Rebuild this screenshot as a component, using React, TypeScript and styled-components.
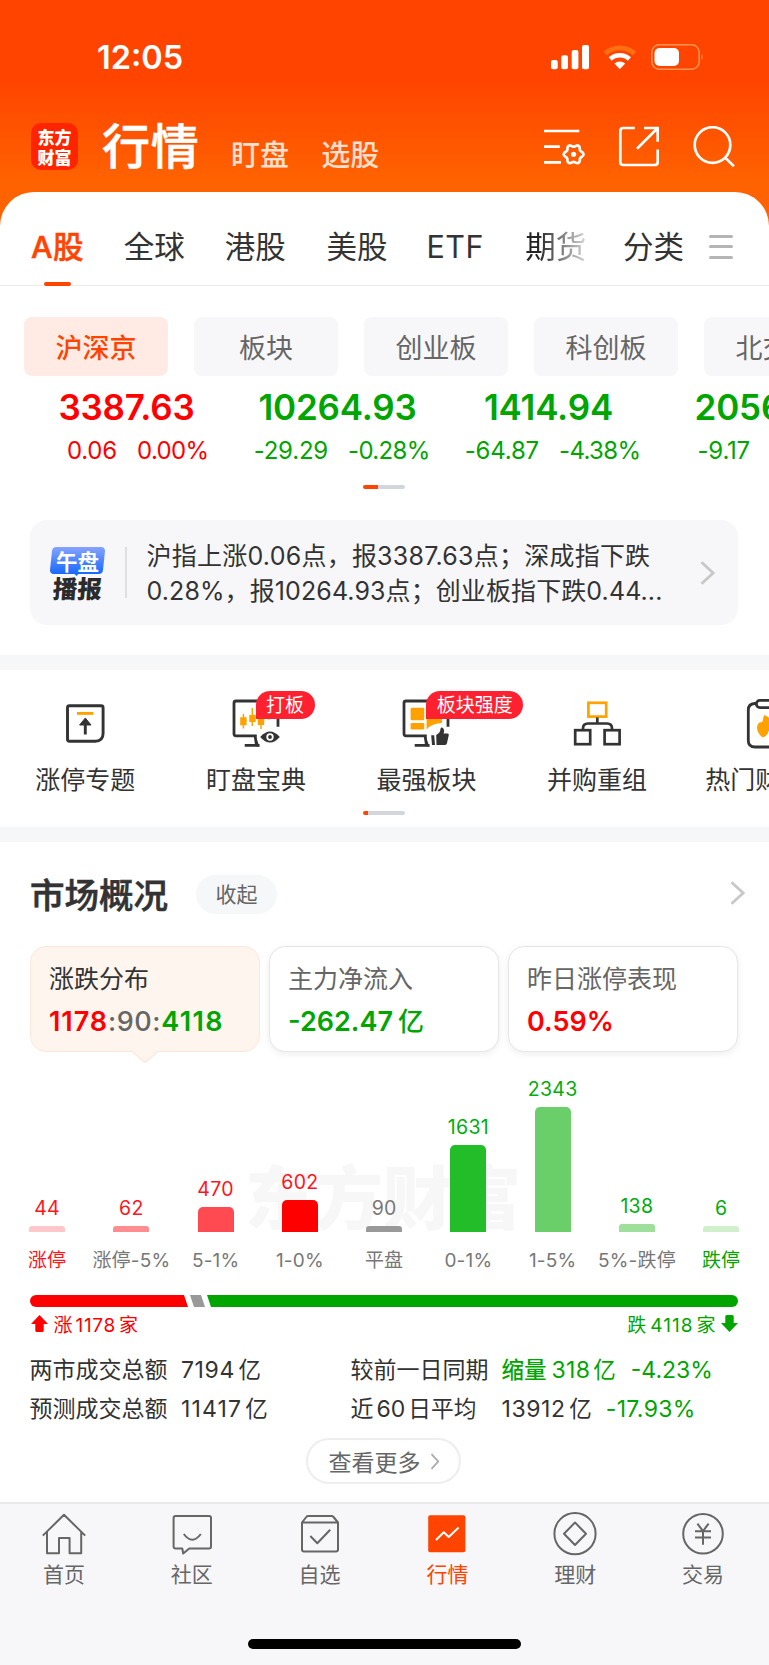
import React from 'react';
import styled, { createGlobalStyle } from 'styled-components';

const RED = '#ff0000';
const GREEN = '#00a500';
const ORANGE = '#ff4400';
const INK = '#333333';
const AMBER = '#ffa200';

const GlobalStyle = createGlobalStyle`
  * { box-sizing: border-box; }
  body {
    margin: 0;
    background: #fff;
    color: ${INK};
    font-family: Inter, "Noto Sans CJK SC", sans-serif;
    overflow: hidden;
  }
  svg { display: block; flex: none; }
`;

const Screen = styled.div`
  width: 769px;
  height: 1665px;
  display: flex;
  flex-direction: column;
  overflow: hidden;
  background: linear-gradient(#ff4400 0, #ff4400 80px, #ff6200 180px, #ff6200 240px, #fff 241px);
`;

const Txt = styled.span<{ $size: number; $color?: string; $weight?: number; $ls?: number; $ml?: number }>`
  font-size: ${(p) => p.$size}px;
  color: ${(p) => p.$color ?? 'inherit'};
  font-weight: ${(p) => p.$weight ?? 400};
  letter-spacing: ${(p) => p.$ls ?? 0}px;
  margin-left: ${(p) => p.$ml ?? 0}px;
  line-height: 1.2;
  white-space: nowrap;
`;

/* ---------- status bar and header ---------- */

const StatusBar = styled.div`
  height: 114px;
  padding: 0 65px 0 97px;
  display: flex;
  align-items: center;
  color: #fff;
`;

const StatusIcons = styled.div`
  margin-left: auto;
`;

const Header = styled.header`
  height: 78px;
  padding: 0 34px 13px 31px;
  display: flex;
  align-items: center;
  color: #fff;
`;

const Logo = styled.div`
  width: 47px;
  height: 47px;
  border-radius: 10px;
  background: #ff2400;
  display: flex;
  flex-direction: column;
  align-items: center;
  justify-content: center;
  font: 900 17px/19.5px "Noto Sans CJK SC", sans-serif;
  white-space: nowrap;
`;

const HeaderTitle = styled.h1`
  margin: 0 0 0 24px;
  font-size: 48px;
  line-height: 48px;
  font-weight: 500;
  letter-spacing: 0.8px;
  -webkit-text-stroke: 0.6px currentColor;
`;

const HeaderLink = styled.span<{ $gap: number }>`
  margin: 19px 0 0 ${(p) => p.$gap}px;
  font-size: 29px;
  line-height: 30px;
  font-weight: 500;
  color: #ffe0cf;
`;

const HeaderIcons = styled.div`
  margin-left: auto;
  display: flex;
  gap: 32.5px;

  > :nth-child(2) {
    margin: 0 1.5px 0 -1.5px;
  }
`;

/* ---------- white sheet ---------- */

const Sheet = styled.main`
  flex: 1;
  background: #fff;
  border-radius: 34px 34px 0 0;
  display: flex;
  flex-direction: column;
  overflow: hidden;
`;

const Tabs = styled.nav`
  height: 94px;
  padding: 1px 36px 0 31px;
  display: flex;
  align-items: stretch;
  border-bottom: 1px solid #ececec;
`;

const Tab = styled.div<{ $active?: boolean; $ml?: number; $fade?: boolean; $ls?: number }>`
  position: relative;
  display: flex;
  align-items: center;
  height: 92px;
  padding-top: 15px;
  margin-left: ${(p) => p.$ml ?? 0}px;
  font-size: 30.5px;
  line-height: 34px;
  letter-spacing: ${(p) => p.$ls ?? 0}px;
  white-space: nowrap;
  font-weight: ${(p) => (p.$active ? 500 : 400)};
  -webkit-text-stroke: ${(p) => (p.$active ? '0.5px currentColor' : '0')};
  color: ${(p) => (p.$active ? ORANGE : INK)};
  ${(p) =>
    p.$fade &&
    `background: linear-gradient(90deg, #222 20%, #ccc 95%); background-clip: text; -webkit-background-clip: text; color: transparent;`}
`;

const TabUnderline = styled.i`
  position: absolute;
  left: 13px;
  bottom: -1px;
  width: 27px;
  height: 4px;
  border-radius: 2px;
  background: ${ORANGE};
`;

const MenuIcon = styled.div`
  margin-left: auto;
  display: flex;
  flex-direction: column;
  justify-content: center;
  gap: 7.5px;
  padding-top: 15px;
`;

const MenuLine = styled.i`
  width: 24px;
  height: 3px;
  border-radius: 2px;
  background: #b5b5b5;
`;

const Chips = styled.div`
  display: flex;
  gap: 26px;
  padding: 31px 0 0 24px;
  height: 90px;
`;

const Chip = styled.div<{ $active?: boolean }>`
  flex: none;
  width: 144px;
  height: 59px;
  border-radius: 8px;
  display: flex;
  align-items: center;
  justify-content: center;
  padding-top: 4px;
  font-size: 27px;
  line-height: 32px;
  white-space: nowrap;
  background: ${(p) => (p.$active ? '#ffebe3' : '#f7f7fa')};
  color: ${(p) => (p.$active ? ORANGE : '#666')};
  font-weight: ${(p) => (p.$active ? 500 : 400)};
`;

const Quotes = styled.div`
  height: 109px;
  padding: 13px 0 0 21px;
  display: flex;
`;

const Quote = styled.div<{ $color: string }>`
  flex: none;
  width: 211px;
  color: ${(p) => p.$color};
`;

const QuotePrice = styled.div`
  text-align: center;
  font-size: 35px;
  line-height: 36px;
  font-weight: 600;
  letter-spacing: -0.2px;
`;

const QuoteMoves = styled.div`
  display: grid;
  grid-template-columns: 96px 1fr;
  column-gap: 20px;
  margin-top: 11px;
  font-size: 24px;
  line-height: 30px;
  white-space: nowrap;
`;

const MoveAmount = styled.span`
  text-align: right;
  letter-spacing: -0.2px;
`;

const MovePercent = styled.span`
  letter-spacing: -0.65px;
`;

const Pager = styled.div<{ $active: number }>`
  width: 42px;
  height: 4px;
  margin: 0 0 0 363px;
  border-radius: 2px;
  background: linear-gradient(90deg, ${ORANGE} ${(p) => p.$active}px, #d3d5dd ${(p) => p.$active}px);
`;

const News = styled.section`
  margin: 31px 31px 30px 30px;
  height: 105px;
  padding-left: 20px;
  border-radius: 17px;
  background: #f7f7fa;
  display: flex;
  align-items: center;
`;

const NewsBadge = styled.div`
  width: 55px;
  height: 51px;
  display: flex;
  flex-direction: column;
  align-items: center;
  font-family: "Noto Sans CJK SC", sans-serif;
`;

const NewsBadgeTop = styled.div`
  position: relative;
  width: 53px;
  height: 27px;
  border-radius: 4px;
  transform: skewX(-6deg);
  background: linear-gradient(#86a3ff, #1769ff);
  color: #fff;
  font-size: 21.5px;
  line-height: 27px;
  font-weight: 700;
  text-align: center;

  &::after {
    content: '';
    position: absolute;
    left: 24px;
    top: 26px;
    border: 3px solid transparent;
    border-top-color: #1769ff;
    border-bottom: 0;
  }
`;

const NewsBadgeText = styled.span`
  display: block;
  transform: skewX(6deg);
`;

const NewsBadgeBottom = styled.div`
  margin-top: 2px;
  transform: skewX(-4deg);
  color: #2b2b2b;
  font-size: 24.5px;
  line-height: 24px;
  font-weight: 900;
  white-space: nowrap;
`;

const NewsRule = styled.i`
  width: 1.5px;
  height: 51px;
  margin: 0 20px;
  background: #dfdfe3;
`;

const NewsText = styled.p`
  margin: 3px 0 0;
  width: 534px;
`;

const NewsLine = styled.span<{ $ls: number }>`
  display: block;
  font-size: 25px;
  line-height: 35.5px;
  letter-spacing: ${(p) => p.$ls}px;
  white-space: nowrap;
`;

const NewsArrow = styled.div`
  margin-left: 19.5px;
`;

const Band = styled.div`
  height: 15px;
  flex: none;
  background: #f6f7f9;
`;

/* ---------- shortcuts ---------- */

const Shortcuts = styled.section`
  height: 157px;
  flex: none;
`;

const ShortcutRow = styled.div`
  display: flex;
  height: 141px;
`;

const Shortcut = styled.div`
  position: relative;
  flex: none;
  width: 170.6px;
  padding-top: 23px;
  display: flex;
  flex-direction: column;
  align-items: center;
  gap: 11px;
  font-size: 25px;
  line-height: 36px;
  white-space: nowrap;
`;

const Badge = styled.span`
  position: absolute;
  left: 85px;
  top: 21px;
  height: 28px;
  padding: 1px 10.5px 0 10.5px;
  border-radius: 14px 14px 14px 0;
  background: #ff2030;
  color: #fff;
  font-size: 19px;
  line-height: 28px;
`;

/* ---------- market overview ---------- */

const Market = styled.section`
  flex: none;
  height: 660px;
  padding: 33px 31px 0 30px;
`;

const MarketHead = styled.div`
  display: flex;
  align-items: center;
  height: 39px;
  margin-right: -6.5px;
`;

const MarketTitle = styled.h2`
  margin: 3px 0 0;
  font-size: 34.5px;
  line-height: 36px;
  font-weight: 500;
  -webkit-text-stroke: 0.6px currentColor;
`;

const Collapse = styled.span`
  margin-left: 28px;
  width: 81px;
  height: 39px;
  border-radius: 20px;
  background: #f6f7f9;
  color: #666;
  font-size: 21px;
  line-height: 39px;
  text-align: center;
`;

const HeadChevron = styled.div`
  margin: -4px 0 0 auto;
`;

const Cards = styled.div`
  margin-top: 32px;
  display: grid;
  grid-template-columns: repeat(3, 1fr);
  gap: 9px;
`;

const Card = styled.div<{ $active?: boolean }>`
  position: relative;
  height: 106px;
  padding: 14px 0 0 18px;
  border-radius: 16px;
  border: 1.5px solid ${(p) => (p.$active ? '#ffe6db' : '#e6e6e6')};
  background: ${(p) => (p.$active ? '#fff5ef' : '#fff')};
  box-shadow: ${(p) => (p.$active ? 'none' : '0 2px 7px rgba(0, 0, 0, 0.07)')};
`;

const CardLabel = styled.div<{ $active?: boolean }>`
  font-size: 25px;
  line-height: 36px;
  color: ${(p) => (p.$active ? INK : '#666')};
`;

const CardValue = styled.div`
  margin-top: 7px;
  font-size: 27px;
  line-height: 36px;
  font-weight: 600;
  white-space: nowrap;
`;

const CardPointer = styled.svg`
  position: absolute;
  left: 100px;
  top: 103px;
`;

const Chart = styled.div`
  position: relative;
  height: 180px;
`;

const Watermark = styled.div`
  position: absolute;
  left: 215px;
  bottom: -2px;
  font: 900 69px/80px "Noto Sans CJK SC", sans-serif;
  color: #f7f7f7;
  white-space: nowrap;
`;

const Bars = styled.div`
  position: relative;
  display: grid;
  grid-template-columns: repeat(9, 84.25px);
  margin: 0 -26px 0 -25px;
  height: 180px;
  align-items: end;
`;

const BarColumn = styled.div`
  display: flex;
  flex-direction: column;
  align-items: center;
`;

const BarValue = styled.span<{ $color: string }>`
  font-size: 19.5px;
  line-height: 20px;
  letter-spacing: 0.3px;
  margin-bottom: 8px;
  color: ${(p) => p.$color};
`;

const Bar = styled.i<{ $h: number; $fill: string }>`
  width: 36px;
  height: ${(p) => p.$h}px;
  border-radius: ${(p) => (p.$h > 20 ? 5 : 3)}px ${(p) => (p.$h > 20 ? 5 : 3)}px 0 0;
  background: ${(p) => p.$fill};
`;

const Axis = styled.div`
  display: grid;
  grid-template-columns: repeat(9, 84.25px);
  margin: 17px -26px 0 -25px;
`;

const AxisLabel = styled.span<{ $color: string }>`
  text-align: center;
  font-size: 19px;
  line-height: 24px;
  letter-spacing: 0.2px;
  white-space: nowrap;
  color: ${(p) => p.$color};
`;

const Ratio = styled.div`
  margin-top: 22px;
  height: 12px;
  display: flex;
`;

const RatioPart = styled.i<{ $w?: number; $fill: string; $clip: string; $round: string; $ml?: number }>`
  ${(p) => (p.$w ? `width: ${p.$w}px;` : 'flex: 1;')}
  margin-left: ${(p) => p.$ml ?? 0}px;
  background: ${(p) => p.$fill};
  clip-path: polygon(${(p) => p.$clip});
  border-radius: ${(p) => p.$round};
`;

const RatioLegend = styled.div`
  height: 34px;
  display: flex;
  justify-content: space-between;
  align-items: center;
  padding: 0 0 0 1px;
`;

const LegendItem = styled.div<{ $color: string }>`
  display: flex;
  align-items: center;
  gap: 5.5px;
  font-size: 19px;
  color: ${(p) => p.$color};
`;

const Stats = styled.div`
  margin: 9px 0 0 -0.5px;
  display: grid;
  grid-template-columns: 151.5px 169.5px 151px 1fr;
  grid-auto-rows: 39.5px;
  align-items: center;
  font-size: 23px;
  white-space: nowrap;
`;

const StatCell = styled.span`
  line-height: 30px;
`;

const MoreButton = styled.div`
  width: 155px;
  height: 46px;
  margin: 9px 0 0 276px;
  border: 2px solid #eee;
  border-radius: 23px;
  display: flex;
  align-items: center;
  padding-left: 20.5px;
  gap: 9px;
  font-size: 23px;
  color: #666;
`;

/* ---------- bottom bar ---------- */

const TabBar = styled.footer`
  flex: 1;
  border-top: 2px solid #e9e9ec;
  background: #f7f7fa;
  display: flex;
  flex-direction: column;
  align-items: center;
`;

const TabBarItems = styled.div`
  align-self: flex-start;
  width: 767px;
  display: grid;
  grid-template-columns: repeat(6, 1fr);
  height: 135px;
`;

const TabBarItem = styled.div<{ $active?: boolean }>`
  padding-top: 6px;
  display: flex;
  flex-direction: column;
  align-items: center;
  gap: 2px;
  font-size: 21px;
  line-height: 30px;
  color: ${(p) => (p.$active ? ORANGE : '#666')};
`;

const HomeIndicator = styled.i`
  width: 273px;
  height: 10px;
  border-radius: 5px;
  background: #000;
`;

/* ---------- icons ---------- */

const gearPath = (() => {
  const pts: string[] = [];
  for (let i = 0; i < 72; i++) {
    const t = (i / 72) * Math.PI * 2;
    const r = 8.7 + 1.15 * Math.cos(6 * t);
    pts.push(`${(29.6 + r * Math.cos(t)).toFixed(2)} ${(28.3 + r * Math.sin(t)).toFixed(2)}`);
  }
  return `M${pts.join('L')}Z`;
})();

const FilterIcon = () => (
  <svg width="42" height="42" viewBox="0 0 42 42" fill="none" stroke="#fff" strokeWidth="2.7">
    <path d="M0 5H35.3M0 20.7H15.8M0 36.3H17" />
    <path d={gearPath} />
    <circle cx="29.6" cy="28.3" r="2.6" fill="#fff" stroke="none" />
  </svg>
);

const ShareIcon = () => (
  <svg width="42" height="42" viewBox="616 126 42 42" fill="none" stroke="#fff" strokeWidth="2.7">
    <path d="M633.8 128H622.3Q619.3 128 619.3 131V162Q619.3 165 622.3 165H653.7Q656.7 165 656.7 162V149.6" />
    <path d="M643 128H656.7V141.8M636 148.7 656.2 128.5" />
  </svg>
);

const SearchIcon = () => (
  <svg width="42" height="42" viewBox="692.5 126 42 42" fill="none" stroke="#fff" strokeWidth="2.7">
    <circle cx="712" cy="145" r="17.8" />
    <path d="M724.6 157.6 733.4 166.2" />
  </svg>
);

const StatusGlyphs = () => (
  <svg width="154" height="28" viewBox="550 43 154 28" fill="none">
    <g fill="#fff">
      <rect x="551" y="60" width="6.7" height="9.3" rx="2" />
      <rect x="561.3" y="55.3" width="6.7" height="14" rx="2" />
      <rect x="571.7" y="50" width="6.7" height="19.3" rx="2" />
      <rect x="582" y="45" width="7" height="24.3" rx="2" />
    </g>
    <path d="M605.2 53.6A21.4 21.4 0 0 1 634.4 53.6" stroke="#ff7010" strokeWidth="4.8" />
    <path d="M610.2 59A14 14 0 0 1 629.4 59" stroke="#fff" strokeWidth="4.6" />
    <path d="M619.8 69.3 614.4 63.6A8 8 0 0 1 625.2 63.6Z" fill="#fff" />
    <rect x="651.8" y="44.8" width="47.4" height="24.4" rx="7.5" stroke="#ff9350" strokeWidth="1.6" />
    <rect x="654.5" y="48" width="24.5" height="18" rx="5" fill="#fff" />
    <path d="M701.5 53.5Q704 57 701.5 60.5Z" fill="#ff9350" />
  </svg>
);

const Chevron = ({ w, h, s = 2.6, c = '#c8c8c8' }: { w: number; h: number; s?: number; c?: string }) => (
  <svg width={w} height={h} viewBox={`0 0 ${w} ${h}`} fill="none" stroke={c} strokeWidth={s}>
    <path d={`M1.5 1.2 ${w - 1.8} ${h / 2} 1.5 ${h - 1.2}`} />
  </svg>
);

const LimitUpIcon = () => (
  <svg width="50" height="58" viewBox="60.2 693 50 58" fill="none" stroke={INK} strokeWidth="2.9">
    <path d="M69.7 705.7H101.3Q103.3 705.7 103.3 707.7V733.3Q103.3 741.3 95.3 741.3H69.7Q67.7 741.3 67.7 739.3V707.7Q67.7 705.7 69.7 705.7Z" />
    <path d="M77.2 713.4H93.6" stroke={AMBER} />
    <path d="M85.5 722V734.5" />
    <path d="M85.5 718 91.2 725H79.8Z" fill={INK} stroke={INK} strokeWidth="1" strokeLinejoin="round" />
  </svg>
);

const MonitorFrame = () => (
  <path
    d="M256.8 735.8H236Q234 735.8 234 733.8V703Q234 701 236 701H276Q278 701 278 703V726.8M255.2 736.5 256.5 745.2M244.7 745.4H259.5"
    stroke={INK}
    strokeWidth="2.8"
  />
);

const WatchIcon = () => (
  <svg width="50" height="58" viewBox="231 693 50 58" fill="none">
    <MonitorFrame />
    <path d="M243.4 714V728.5M252.3 708V726M261 709V729M268.8 706V719.5" stroke={AMBER} strokeWidth="1.5" />
    <path d="M240.2 717.3h6.4v8h-6.4zM249.3 715h6.4v7h-6.4zM257.8 716h6.4v9h-6.4z" fill={AMBER} />
    <path d="M255.8 737 259.5 746.5H256Z" fill={INK} />
    <path d="M260.2 737Q270 726 279.8 737 270 748 260.2 737Z" fill={INK} />
    <circle cx="270" cy="737" r="2.8" stroke="#fff" strokeWidth="1.8" />
  </svg>
);

const BlocksIcon = () => (
  <svg width="50" height="58" viewBox="231 693 50 58" fill="none">
    <MonitorFrame />
    <rect x="240.6" y="707.7" width="13.6" height="12.6" rx="1.3" fill={AMBER} />
    <rect x="240.6" y="723" width="13.6" height="6.6" rx="1.3" fill={AMBER} />
    <path d="M256.6 707.7H272V723Q262 723 256.6 729.5Z" fill={AMBER} />
    <path d="M255.6 737 259.5 746.5H256Z" fill={INK} />
    <path
      d="M261.2 735.2H264.2L265 745H262ZM266.2 735Q270.2 733.2 270.6 728.6 270.9 727 272.5 727.8 275 729.4 273.6 733.6H277.8Q279 733.7 278.8 735L276.9 743.6Q276.5 745 275 745H266.5Z"
      fill={INK}
    />
  </svg>
);

const MergeIcon = () => (
  <svg width="50" height="58" viewBox="572 693 50 58" fill="none" stroke={INK} strokeWidth="2.7">
    <rect x="588.4" y="702.8" width="17.8" height="13.8" stroke={AMBER} />
    <path d="M597.3 717.5V723.5M583 730V728.5Q583 723.5 588 723.5H607Q612 723.5 612 728.5V730" />
    <rect x="575.2" y="730.2" width="15" height="14" />
    <rect x="604.6" y="730.2" width="15" height="14" />
  </svg>
);

const HotIcon = () => (
  <svg width="50" height="58" viewBox="743 693 50 58" fill="none" stroke={INK} strokeWidth="2.8">
    <path d="M756 703.5H754.5Q748.3 704 748.3 710V740.5Q748.3 747 755 747H781Q787.7 747 787.7 740.5V710Q787.7 704 781.5 703.5H780" />
    <rect x="756.4" y="700.4" width="23.6" height="7.2" rx="3.4" />
    <path
      d="M764 715Q772 718 773 725 775 723 775 720.5 780 728 777 734 775 737 772 737.5 771.5 733 768.5 731 768 735 763 737.5 757.5 734 757 728 757 724 760 722 762.5 723.5 763 719Z"
      fill={AMBER}
      stroke="none"
    />
  </svg>
);

const BarIcon = ({ cx, children }: { cx: number; children: React.ReactNode }) => (
  <svg
    width="48"
    height="48"
    viewBox={`${cx - 24} 1510 48 48`}
    fill="none"
    stroke="#666"
    strokeWidth="2"
    strokeLinejoin="round"
  >
    {children}
  </svg>
);

const ArrowGlyph = ({ down }: { down?: boolean }) => (
  <svg width="17" height="17" viewBox="0 0 17 17">
    <path
      d="M8.5 0 17 9H12.7V15.5Q12.7 17 11.2 17H5.8Q4.3 17 4.3 15.5V9H0Z"
      fill={down ? GREEN : RED}
      transform={down ? 'rotate(180 8.5 8.5)' : undefined}
    />
  </svg>
);

/* ---------- data ---------- */

const tabs = [
  { label: 'A股', active: true, ls: 0.4 },
  { label: '全球', ml: 39.8 },
  { label: '港股', ml: 40 },
  { label: '美股', ml: 40.7 },
  { label: 'ETF', ml: 39, ls: 0.5 },
  { label: '期货', ml: 41.2, fade: true },
  { label: '分类', ml: 36.8 },
];

const chips = ['沪深京', '板块', '创业板', '科创板', '北交所'];

const quotes = [
  { price: '3387.63', amount: '0.06', percent: '0.00%', color: RED },
  { price: '10264.93', amount: '-29.29', percent: '-0.28%', color: GREEN },
  { price: '1414.94', amount: '-64.87', percent: '-4.38%', color: GREEN },
  { price: '2056.17', amount: '-9.17', percent: '-0.44%', color: GREEN },
];

const shortcuts = [
  { label: '涨停专题', icon: <LimitUpIcon /> },
  { label: '盯盘宝典', icon: <WatchIcon />, badge: '打板' },
  { label: '最强板块', icon: <BlocksIcon />, badge: '板块强度' },
  { label: '并购重组', icon: <MergeIcon /> },
  { label: '热门财富号', icon: <HotIcon /> },
];

const distribution = [
  { value: 44, label: '涨停', h: 6.5, fill: '#ffc7c9', color: '#ff1420', axis: '#ff1420' },
  { value: 62, label: '涨停-5%', h: 6.5, fill: '#ff8d90', color: '#ff1420' },
  { value: 470, label: '5-1%', h: 25.5, fill: '#ff4a52', color: '#ff1420' },
  { value: 602, label: '1-0%', h: 32.5, fill: '#ff0000', color: '#ff1420' },
  { value: 90, label: '平盘', h: 6.5, fill: '#999999', color: '#777' },
  { value: 1631, label: '0-1%', h: 87.5, fill: '#22bd28', color: '#00ad0c' },
  { value: 2343, label: '1-5%', h: 125.5, fill: '#6bcf69', color: '#00ad0c' },
  { value: 138, label: '5%-跌停', h: 8, fill: '#9ddf9b', color: '#00ad0c' },
  { value: 6, label: '跌停', h: 6.5, fill: '#cfefcd', color: '#00ad0c', axis: '#00a500' },
];

const bottomTabs = [
  {
    label: '首页',
    icon: (
      <BarIcon cx={64.2}>
        <path d="M43 1535.6 64.2 1514.8 85.4 1535.6M47.2 1531.8V1553.3H59.2V1538H69.8V1553.3H81.4V1531.8" />
      </BarIcon>
    ),
  },
  {
    label: '社区',
    icon: (
      <BarIcon cx={192}>
        <path d="M175.6 1516H209Q211 1516 211 1518V1546.5Q211 1548.5 209 1548.5H189.3L183.2 1553.5 182.3 1548.5H175.6Q173.6 1548.5 173.6 1546.5V1518Q173.6 1516 175.6 1516Z" />
        <path d="M183.8 1534Q192.3 1545.5 200.8 1534" />
      </BarIcon>
    ),
  },
  {
    label: '自选',
    icon: (
      <BarIcon cx={320}>
        <path d="M302 1522.5 306.3 1517Q307 1516 308.3 1516H331.5Q332.8 1516 333.5 1517L338 1522.5V1549.6Q338 1551.6 336 1551.6H304Q302 1551.6 302 1549.6ZM302 1522.5H338" />
        <path d="M310.3 1536 317.3 1543.2 330.2 1529.8" />
      </BarIcon>
    ),
  },
  {
    label: '行情',
    active: true,
    icon: (
      <BarIcon cx={448}>
        <rect x="429.2" y="1515.2" width="37.2" height="37" rx="2" fill={ORANGE} stroke="none" />
        <path d="M437 1540 444.8 1532.2 449.7 1537 459.6 1527.6" stroke="#fff" />
      </BarIcon>
    ),
  },
  {
    label: '理财',
    icon: (
      <BarIcon cx={576}>
        <circle cx="576" cy="1533.7" r="20.6" />
        <path d="M576 1522.5 587 1533.7 576 1545 565 1533.7Z" />
      </BarIcon>
    ),
  },
  {
    label: '交易',
    icon: (
      <BarIcon cx={704}>
        <circle cx="704" cy="1533.7" r="19.8" />
        <path d="M698.4 1523.6 704 1531.2 709.6 1523.6M704 1531.2V1544.8M696 1531.2H712M696 1537.5H712" />
      </BarIcon>
    ),
  },
];

export default function App() {
  return (
    <Screen>
      <GlobalStyle />
      <StatusBar>
        <Txt $size={32.5} $weight={600}>12:05</Txt>
        <StatusIcons>
          <StatusGlyphs />
        </StatusIcons>
      </StatusBar>
      <Header>
        <Logo>
          <span>东方</span>
          <span>财富</span>
        </Logo>
        <HeaderTitle>行情</HeaderTitle>
        <HeaderLink $gap={31.5}>盯盘</HeaderLink>
        <HeaderLink $gap={32}>选股</HeaderLink>
        <HeaderIcons>
          <FilterIcon />
          <ShareIcon />
          <SearchIcon />
        </HeaderIcons>
      </Header>

      <Sheet>
        <Tabs>
          {tabs.map((t) => (
            <Tab key={t.label} $active={t.active} $ml={t.ml} $fade={t.fade} $ls={t.ls}>
              {t.label}
              {t.active && <TabUnderline />}
            </Tab>
          ))}
          <MenuIcon>
            <MenuLine />
            <MenuLine />
            <MenuLine />
          </MenuIcon>
        </Tabs>

        <Chips>
          {chips.map((c, i) => (
            <Chip key={c} $active={i === 0}>{c}</Chip>
          ))}
        </Chips>

        <Quotes>
          {quotes.map((q) => (
            <Quote key={q.price} $color={q.color}>
              <QuotePrice>{q.price}</QuotePrice>
              <QuoteMoves>
                <MoveAmount>{q.amount}</MoveAmount>
                <MovePercent>{q.percent}</MovePercent>
              </QuoteMoves>
            </Quote>
          ))}
        </Quotes>
        <Pager $active={15} />

        <News>
          <NewsBadge>
            <NewsBadgeTop>
              <NewsBadgeText>午盘</NewsBadgeText>
            </NewsBadgeTop>
            <NewsBadgeBottom>播报</NewsBadgeBottom>
          </NewsBadge>
          <NewsRule />
          <NewsText>
            <NewsLine $ls={0.24}>沪指上涨0.06点，报3387.63点；深成指下跌</NewsLine>
            <NewsLine $ls={0.1}>0.28%，报10264.93点；创业板指下跌0.44...</NewsLine>
          </NewsText>
          <NewsArrow>
            <Chevron w={15} h={24} s={2.8} />
          </NewsArrow>
        </News>

        <Band />

        <Shortcuts>
          <ShortcutRow>
            {shortcuts.map((s) => (
              <Shortcut key={s.label}>
                {s.icon}
                {s.label}
                {s.badge && <Badge>{s.badge}</Badge>}
              </Shortcut>
            ))}
          </ShortcutRow>
          <Pager $active={5} />
        </Shortcuts>

        <Band />

        <Market>
          <MarketHead>
            <MarketTitle>市场概况</MarketTitle>
            <Collapse>收起</Collapse>
            <HeadChevron>
              <Chevron w={15} h={24} s={2.8} />
            </HeadChevron>
          </MarketHead>

          <Cards>
            <Card $active>
              <CardLabel $active>涨跌分布</CardLabel>
              <CardValue>
                <Txt $size={27} $weight={600} $color={RED} $ls={0.9}>1178</Txt>
                <Txt $size={27} $weight={500} $color="#666" $ls={0.6}>:90:</Txt>
                <Txt $size={27} $weight={600} $color={GREEN} $ls={1.4}>4118</Txt>
              </CardValue>
              <CardPointer width="28" height="13" viewBox="0 0 28 13">
                <path d="M0 0H28L16 11Q14 13 12 11Z" fill="#fff5ef" />
                <path d="M1 1.3 12 11Q14 13 16 11L27 1.3" fill="none" stroke="#ffe6db" strokeWidth="1.3" />
              </CardPointer>
            </Card>
            <Card>
              <CardLabel>主力净流入</CardLabel>
              <CardValue>
                <Txt $size={27} $weight={600} $color={GREEN}>-262.47</Txt>
                <Txt $size={26} $weight={500} $color={GREEN} $ml={5}>亿</Txt>
              </CardValue>
            </Card>
            <Card>
              <CardLabel>昨日涨停表现</CardLabel>
              <CardValue>
                <Txt $size={27} $weight={600} $color={RED}>0.59%</Txt>
              </CardValue>
            </Card>
          </Cards>

          <Chart>
            <Watermark>东方财富</Watermark>
            <Bars>
              {distribution.map((d) => (
                <BarColumn key={d.label}>
                  <BarValue $color={d.color}>{d.value}</BarValue>
                  <Bar $h={d.h} $fill={d.fill} />
                </BarColumn>
              ))}
            </Bars>
          </Chart>
          <Axis>
            {distribution.map((d) => (
              <AxisLabel key={d.label} $color={d.axis ?? '#777'}>{d.label}</AxisLabel>
            ))}
          </Axis>

          <Ratio>
            <RatioPart $w={158} $fill={RED} $clip="0 0, 154px 0, 100% 100%, 0 100%" $round="6px 0 0 6px" />
            <RatioPart $w={15} $ml={2} $fill="#999" $clip="0 0, 11px 0, 100% 100%, 4px 100%" $round="0" />
            <RatioPart $ml={2} $fill={GREEN} $clip="0 0, 100% 0, 100% 100%, 4px 100%" $round="0 6px 6px 0" />
          </Ratio>
          <RatioLegend>
            <LegendItem $color={RED}>
              <ArrowGlyph />
              <span>
                涨<Txt $size={19} $ml={3} $ls={0.7}>1178</Txt><Txt $size={19} $ml={3}>家</Txt>
              </span>
            </LegendItem>
            <LegendItem $color={GREEN}>
              <span>
                跌<Txt $size={19} $ml={4} $ls={1}>4118</Txt><Txt $size={19} $ml={3}>家</Txt>
              </span>
              <ArrowGlyph down />
            </LegendItem>
          </RatioLegend>

          <Stats>
            <StatCell>两市成交总额</StatCell>
            <StatCell>
              <Txt $size={23} $ls={0.6}>7194</Txt>
              <Txt $size={22.5} $ml={3.5}>亿</Txt>
            </StatCell>
            <StatCell>较前一日同期</StatCell>
            <StatCell>
              <Txt $size={22.5} $color={GREEN} $weight={500}>缩量</Txt>
              <Txt $size={23} $color={GREEN} $ml={5} $ls={0.3}>318</Txt>
              <Txt $size={22.5} $color={GREEN} $ml={3}>亿</Txt>
              <Txt $size={23} $color={GREEN} $ml={15}>-4.23%</Txt>
            </StatCell>
            <StatCell>预测成交总额</StatCell>
            <StatCell>
              <Txt $size={23} $ls={1.15}>11417</Txt>
              <Txt $size={22.5} $ml={3}>亿</Txt>
            </StatCell>
            <StatCell>
              近<Txt $size={23} $ml={3}>60</Txt><Txt $size={22.7} $ml={3}>日平均</Txt>
            </StatCell>
            <StatCell>
              <Txt $size={23} $ls={0.6}>13912</Txt>
              <Txt $size={22.5} $ml={3.5}>亿</Txt>
              <Txt $size={23} $color={GREEN} $ml={14} $ls={0.35}>-17.93%</Txt>
            </StatCell>
          </Stats>

          <MoreButton>
            查看更多
            <Chevron w={10} h={17} s={1.8} c="#aaa" />
          </MoreButton>
        </Market>

        <TabBar>
          <TabBarItems>
            {bottomTabs.map((b) => (
              <TabBarItem key={b.label} $active={b.active}>
                {b.icon}
                {b.label}
              </TabBarItem>
            ))}
          </TabBarItems>
          <HomeIndicator />
        </TabBar>
      </Sheet>
    </Screen>
  );
}
